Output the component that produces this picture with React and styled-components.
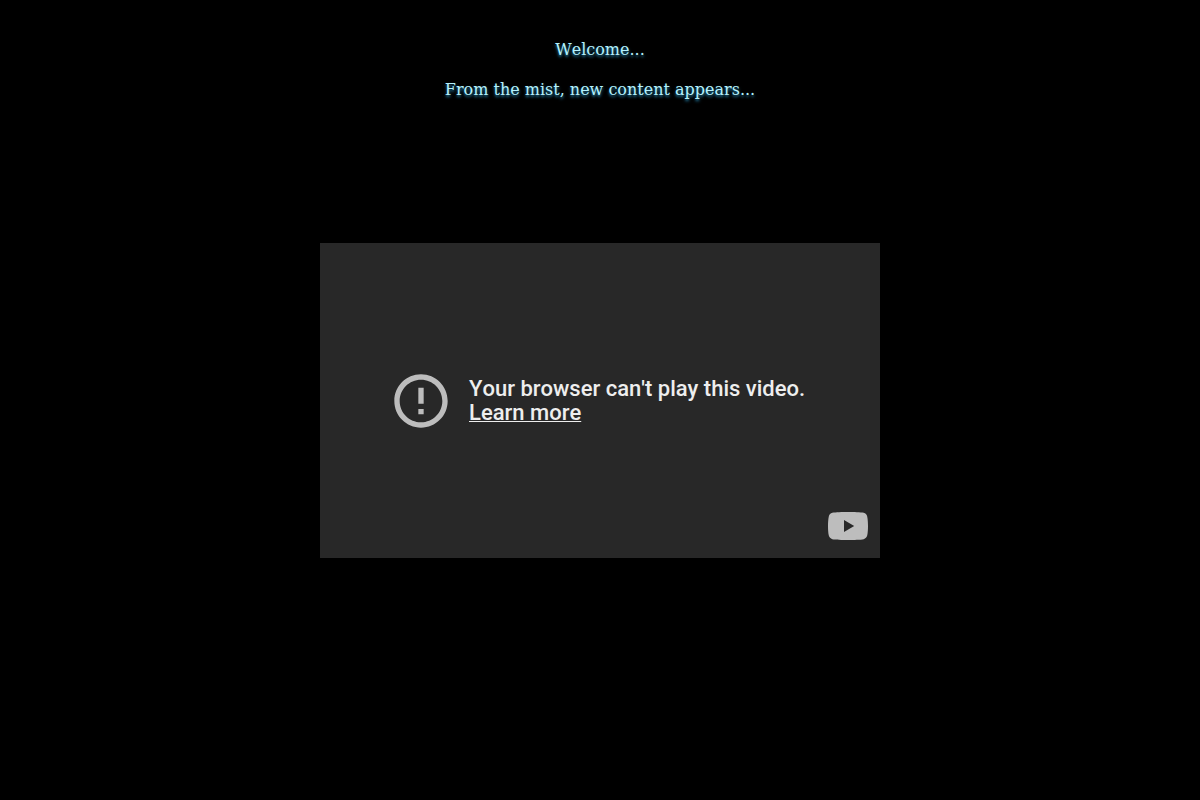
import React from "react";
import styled, { createGlobalStyle } from "styled-components";

const GlobalStyle = createGlobalStyle`
  body {
    margin: 0;
    background: #000;
    font-kerning: none;
  }
`;

const Page = styled.main`
  box-sizing: border-box;
  min-height: 100vh;
  padding: 40px 16px;
  display: flex;
  flex-direction: column;
  align-items: center;
  gap: 143px;
`;

const Intro = styled.header`
  display: flex;
  flex-direction: column;
  gap: 20px;
  text-align: center;
`;

const IntroLine = styled.p`
  margin: 0;
  font-family: "DejaVu Serif", serif;
  font-size: 16px;
  line-height: 20px;
  color: #b4f0fc;
  text-shadow: 0 2px 3px #2688b4;
`;

const Player = styled.section`
  position: relative;
  box-sizing: border-box;
  width: 100%;
  max-width: 560px;
  aspect-ratio: 16 / 9;
  padding: 0 69px;
  display: flex;
  align-items: center;
  gap: 16px;
  background: #282828;
`;

const ErrorIcon = styled.svg`
  flex: none;
  width: 64px;
  height: 64px;
  fill: #bdbdbd;
`;

const Message = styled.div`
  font-family: Roboto, sans-serif;
  font-size: 22px;
  font-weight: 500;
  line-height: 24px;
  color: #eee;
`;

const MessageLink = styled.a`
  color: inherit;
  text-decoration: underline;
  text-decoration-thickness: 1px;
  text-underline-offset: 1px;
`;

const Watermark = styled.a`
  position: absolute;
  right: 12px;
  bottom: 18px;
  display: flex;
`;

const Logo = styled.svg`
  width: 40px;
  height: 28px;
  fill: #bdbdbd;
`;

export default function App() {
  return (
    <>
      <GlobalStyle />
      <Page>
        <Intro>
          <IntroLine>Welcome...</IntroLine>
          <IntroLine>From the mist, new content appears...</IntroLine>
        </Intro>
        <Player aria-label="Video player">
          <ErrorIcon viewBox="0 0 24 24" aria-hidden="true">
            <path d="M11 15h2v2h-2zm0-8h2v6h-2zm.99-5C6.47 2 2 6.48 2 12s4.47 10 9.99 10C17.52 22 22 17.52 22 12S17.52 2 11.99 2zM12 20c-4.42 0-8-3.58-8-8s3.58-8 8-8 8 3.58 8 8-3.58 8-8 8z" />
          </ErrorIcon>
          <Message>
            <div>Your browser can't play this video.</div>
            <MessageLink href="#learn-more">Learn more</MessageLink>
          </Message>
          <Watermark href="#watch" aria-label="Watch on YouTube">
            <Logo viewBox="0 0 40 28" aria-hidden="true">
              <path
                fillRule="evenodd"
                d="M39.2 4.4C38.7 2.5 37.5 1.3 35.7 .8C32.5 .2 26 0 20 0S7.5 .2 4.3 .8C2.5 1.3 1.3 2.5 .8 4.4C.2 7 0 11 0 14S.2 21 .8 23.6C1.3 25.5 2.5 26.7 4.3 27.2C7.5 27.8 14 28 20 28S32.5 27.800 35.7 27.2C37.5 26.7 38.7 25.5 39.2 23.6C39.8 21 40 17 40 14S39.8 7 39.2 4.4zM16 20V8l10.2 6z"
              />
            </Logo>
          </Watermark>
        </Player>
      </Page>
    </>
  );
}
